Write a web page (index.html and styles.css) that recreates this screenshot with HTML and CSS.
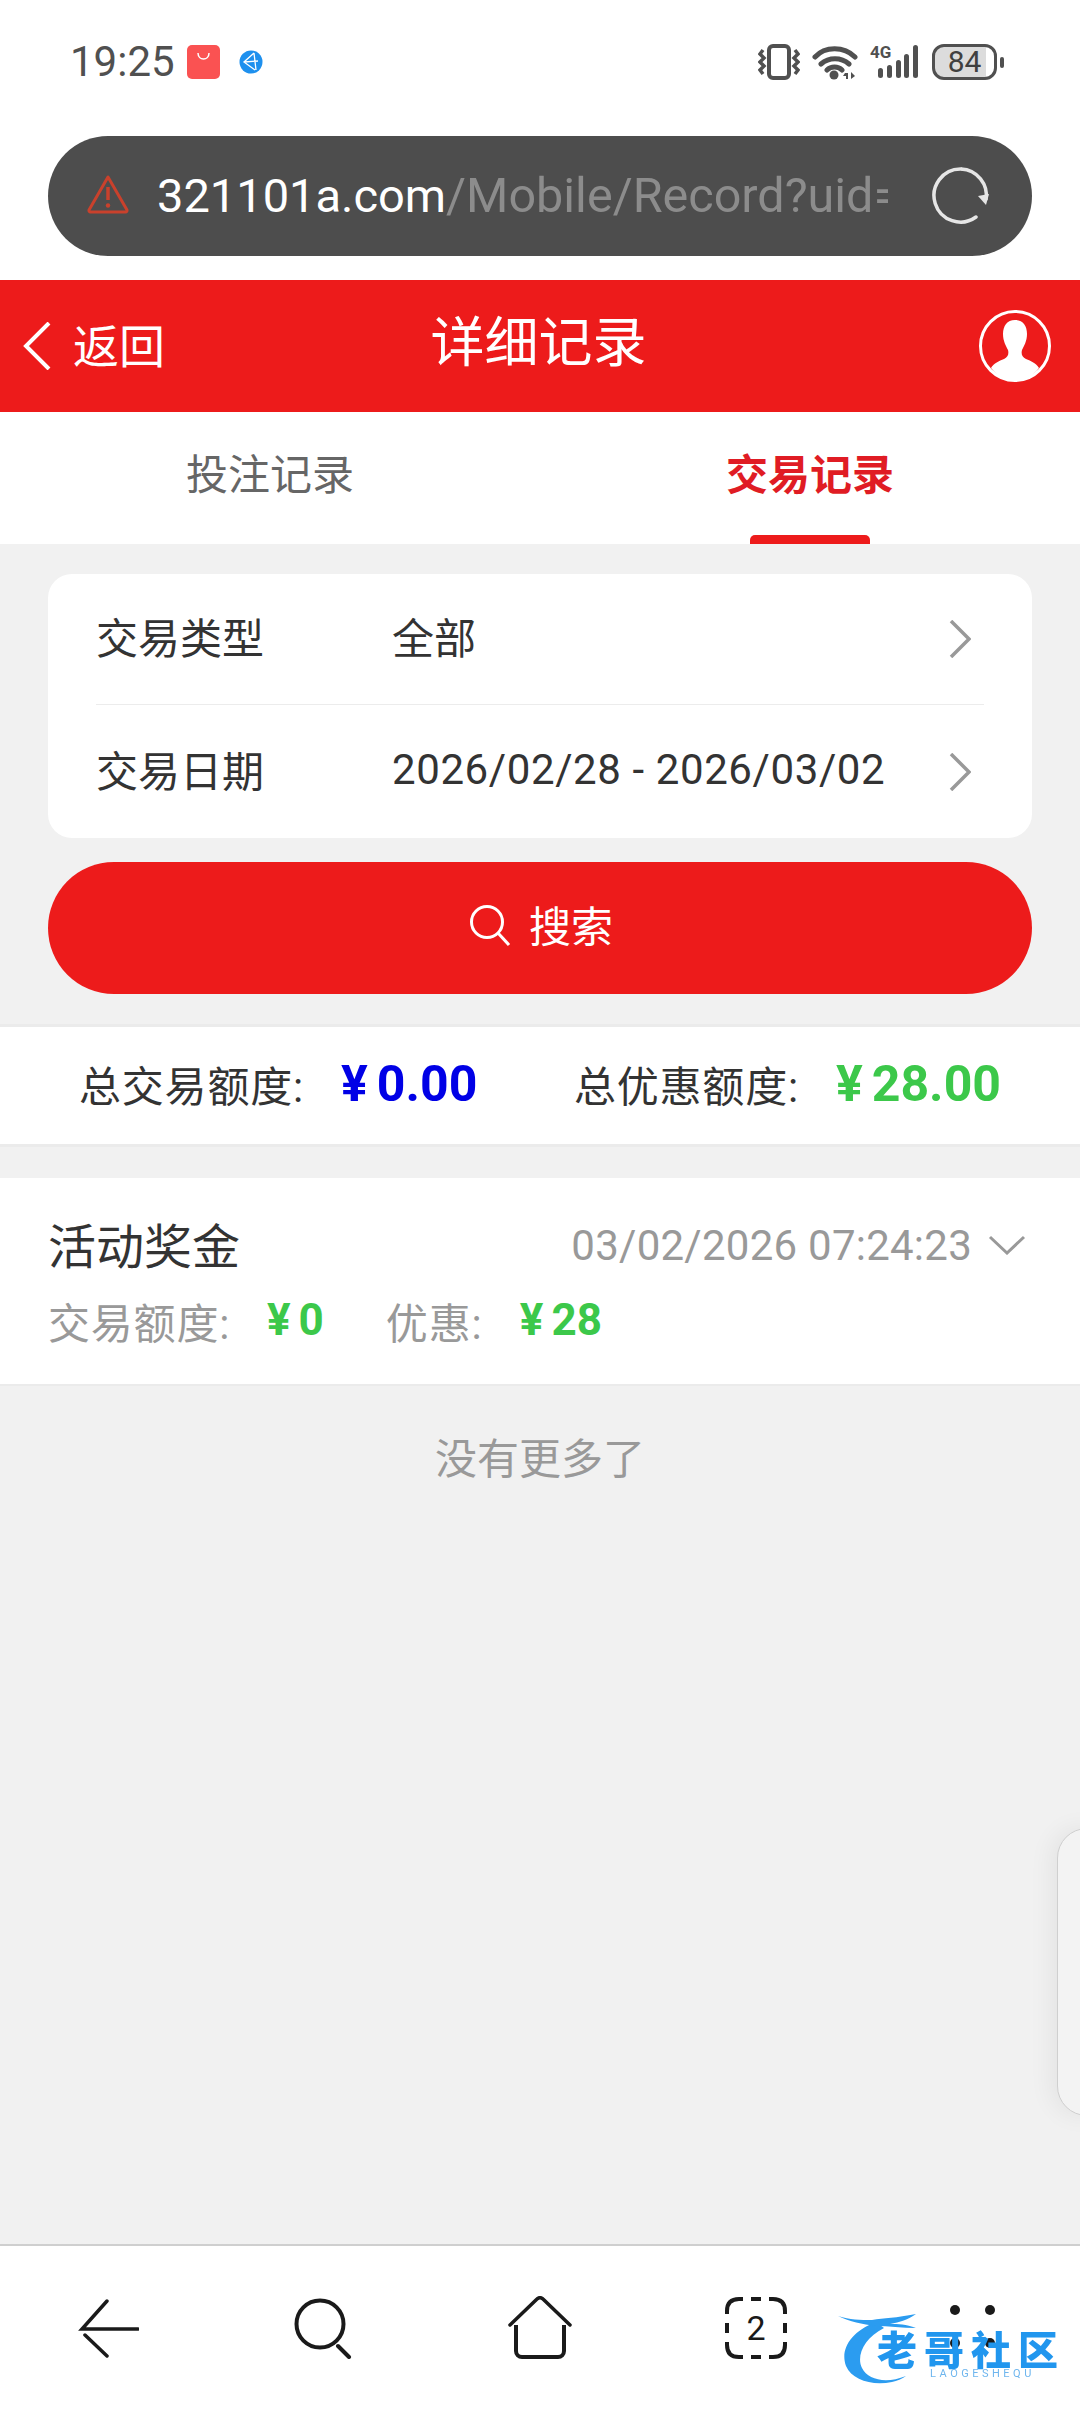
FILE: index.html
```html
<!DOCTYPE html>
<html lang="zh-CN">
<head>
    <meta charset="UTF-8">
    <meta name="viewport" content="width=device-width, initial-scale=1.0">
    <title>详细记录</title>
    <link rel="stylesheet" href="styles.css">
</head>
<body>
<div class="phone">
    <!-- Android status bar -->
    <div class="status-bar">
        <div class="status-left">
            <span class="time">19:25</span>
            <svg class="app-bag" width="33" height="34" viewBox="0 0 33 34">
                <rect width="33" height="34" rx="5" fill="#fa5252"/>
                <path d="M11 8c0 8 11 8 11 0" fill="none" stroke="#fff" stroke-width="1.5"/>
            </svg>
            <svg class="app-globe" width="24" height="24" viewBox="0 0 24 24">
                <circle cx="12" cy="12" r="11.5" fill="#1e90ee"/>
                <path d="M15 3L5 12l11 8M15 3l2 17M5 12l14-1" fill="none" stroke="#fff" stroke-width="1.3"/>
            </svg>
        </div>
        <div class="status-right">
            <svg width="42" height="36" viewBox="0 0 42 36">
                <rect x="11" y="2" width="20" height="32" rx="4" fill="none" stroke="#505050" stroke-width="4"/>
                <path d="M5 6L2 10l4 4-4 4 4 4-4 4 3 4M37 6l3 4-4 4 4 4-4 4 4 4-3 4" fill="none" stroke="#505050" stroke-width="3.5"/>
            </svg>
            <svg width="46" height="36" viewBox="0 0 46 36">
                <path d="M3 13C13 2 32 2 43 13M9 20c8-7 20-7 28 0M15 26c4-4 11-4 15 0" fill="none" stroke="#505050" stroke-width="5" stroke-linecap="round"/>
                <circle cx="22" cy="31" r="4.5" fill="#505050"/>
                <path d="M33 29h3v6h-2v-3h-3zM39 28l4 4-4 3z" fill="#505050"/>
            </svg>
            <div class="signal">
                <span class="signal-4g">4G</span>
                <svg width="44" height="36" viewBox="0 0 44 36">
                    <g fill="#505050">
                        <rect x="2" y="24" width="5" height="10" rx="2.5"/>
                        <rect x="11" y="21" width="5" height="13" rx="2.5"/>
                        <rect x="20" y="16" width="5" height="18" rx="2.5"/>
                        <rect x="28" y="10" width="5" height="24" rx="2.5"/>
                        <rect x="37" y="1" width="5" height="33" rx="2.5"/>
                    </g>
                </svg>
            </div>
            <div class="battery">
                <div class="battery-body">84</div>
                <div class="battery-nub"></div>
            </div>
        </div>
    </div>

    <!-- Browser address bar -->
    <div class="url-wrap">
        <div class="url-bar">
            <svg class="url-warn" width="44" height="40" viewBox="0 0 44 40">
                <path d="M22 3L3 36a1.500 1.500 0 0 0 1.500 2h35a1.500 1.500 0 0 0 1.500-2z" fill="none" stroke="#c9412c" stroke-width="3" stroke-linejoin="round"/>
                <path d="M22 13v13" stroke="#c9412c" stroke-width="3.500"/>
                <circle cx="22" cy="31.500" r="2.200" fill="#c9412c"/>
            </svg>
            <div class="url-text"><span class="url-host">321101a.com</span>/Mobile/Record?uid=</div>
            <svg class="url-reload" width="62" height="60" viewBox="0 0 62 60">
                <path d="M33 3A26.500 26.500 0 1 0 48 51" fill="none" stroke="#e6e6e6" stroke-width="3.500" stroke-linecap="round"/>
                <path d="M33 3a26.500 26.500 0 0 1 25 31" fill="none" stroke="#e6e6e6" stroke-width="3.500"/>
                <path d="M50 30l8 9 3-11z" fill="#e6e6e6"/>
            </svg>
        </div>
    </div>

    <!-- Page header -->
    <div class="header">
        <div class="header-back">
            <svg width="28" height="48" viewBox="0 0 28 48">
                <path d="M26 1L3 24l23 23" fill="none" stroke="#fff" stroke-width="4"/>
            </svg>
            <span>返回</span>
        </div>
        <div class="header-title">详细记录</div>
        <svg class="header-user" width="74" height="74" viewBox="0 0 74 74">
            <circle cx="37" cy="37" r="34.500" fill="#ed1b1b" stroke="#fff" stroke-width="3"/>
            <path d="M37 11c8 0 12 6 12 14 0 7-3 12-5 16-1 4 0 7 4 9 5 2 10 4 13 9-6 8-15 13-24 13s-18-5-24-13c3-5 8-7 13-9 4-2 5-5 4-9-2-4-5-9-5-16 0-8 4-14 12-14z" fill="#fff"/>
        </svg>
    </div>

    <!-- Tabs -->
    <div class="tabs">
        <div class="tab">投注记录</div>
        <div class="tab tab-active">交易记录</div>
    </div>

    <!-- Main content -->
    <div class="content">
        <div class="filter-card">
            <div class="filter-row filter-row-first">
                <span class="filter-label">交易类型</span>
                <span class="filter-value">全部</span>
                <svg width="22" height="38" viewBox="0 0 22 38"><path d="M2 1l18 18L2 37" fill="none" stroke="#999" stroke-width="3.500"/></svg>
            </div>
            <div class="filter-row">
                <span class="filter-label">交易日期</span>
                <span class="filter-value filter-date">2026/02/28 - 2026/03/02</span>
                <svg width="22" height="38" viewBox="0 0 22 38"><path d="M2 1l18 18L2 37" fill="none" stroke="#999" stroke-width="3.500"/></svg>
            </div>
        </div>

        <button class="search-button">
            <svg width="42" height="42" viewBox="0 0 42 42">
                <circle cx="18" cy="18" r="15.500" fill="none" stroke="#fff" stroke-width="3"/>
                <path d="M29 29l11 12" stroke="#fff" stroke-width="3"/>
            </svg>
            <span>搜索</span>
        </button>

        <div class="summary">
            <div class="summary-part">
                <span class="summary-label">总交易额度:</span>
                <span class="summary-num num-blue"><span class="yen">¥</span>0.00</span>
            </div>
            <div class="summary-part">
                <span class="summary-label">总优惠额度:</span>
                <span class="summary-num num-green"><span class="yen">¥</span>28.00</span>
            </div>
        </div>

        <div class="record">
            <div class="record-top">
                <span class="record-name">活动奖金</span>
                <div class="record-time">
                    <span>03/02/2026 07:24:23</span>
                    <svg width="38" height="20" viewBox="0 0 38 20"><path d="M2 2l17 16L36 2" fill="none" stroke="#999" stroke-width="3"/></svg>
                </div>
            </div>
            <div class="record-bottom">
                <span class="record-label">交易额度:</span>
                <span class="record-num"><span class="yen-small">¥</span>0</span>
                <span class="record-label record-label-gap">优惠:</span>
                <span class="record-num"><span class="yen-small">¥</span>28</span>
            </div>
        </div>

        <div class="no-more">没有更多了</div>
    </div>

    <!-- Browser bottom bar -->
    <div class="bottom-bar">
        <div class="bar-item">
            <svg width="62" height="60" viewBox="0 0 62 60">
                <path d="M30 3L5 31h56M8 37l22 21" fill="none" stroke="#1a1a1a" stroke-width="3.500" stroke-linecap="round"/>
            </svg>
        </div>
        <div class="bar-item">
            <svg width="60" height="62" viewBox="0 0 60 62">
                <circle cx="26" cy="27" r="23.500" fill="none" stroke="#1a1a1a" stroke-width="4"/>
                <path d="M44 49l11 11" stroke="#1a1a1a" stroke-width="4" stroke-linecap="round"/>
            </svg>
        </div>
        <div class="bar-item">
            <svg width="66" height="64" viewBox="0 0 66 64">
                <path d="M3 29L30 3a4 4 0 0 1 6 0l27 26" fill="none" stroke="#1a1a1a" stroke-width="3.500" stroke-linecap="round"/>
                <path d="M9 29v26a6 6 0 0 0 6 6h36a6 6 0 0 0 6-6V29" fill="none" stroke="#1a1a1a" stroke-width="4"/>
            </svg>
        </div>
        <div class="bar-item">
            <div class="tab-count">
                <svg width="62" height="62" viewBox="0 0 62 62">
                    <path d="M2 17V14Q2 2 14 2h4M44 2h4q12 0 12 12v3M60 45v3q0 12-12 12h-4M18 60h-4Q2 60 2 48v-3M26 2h10M26 60h10M2 26v10M60 26v10" fill="none" stroke="#1a1a1a" stroke-width="4"/>
                </svg>
                <span>2</span>
            </div>
        </div>
        <div class="bar-item">
            <div class="menu-dots"><i></i><i></i><i></i><i></i></div>
        </div>
    </div>

    <!-- Floating side panel -->
    <div class="side-panel"></div>

    <!-- Watermark over the bottom bar -->
    <div class="watermark">
        <svg class="watermark-dragon" width="110" height="80" viewBox="0 0 110 80">
            <path d="M40 12C14 22 4 40 10 56c6 14 26 20 46 16 5-1 10-3 14-6-20 8-38 4-44-8-6-12 2-30 22-40z" fill="#2b9cf0"/>
            <path d="M2 6c12 4 22 4 34 4 12-2 24-2 44-6-8 6-16 8-26 10 8 0 16 0 26 4-14 0-28-2-40-2-14-2-26-4-38-10z" fill="#2b9cf0"/>
        </svg>
        <div class="watermark-name">老哥社区</div>
        <div class="watermark-en">LAOGESHEQU</div>
    </div>
</div>
</body>
</html>
```

FILE: styles.css
```css
/* Base styles */
body {
    margin: 0;
    padding: 0;
    font-family: Roboto, "Noto Sans CJK SC", sans-serif;
    color: #333;
}

.phone {
    position: relative;
    width: 1080px;
    height: 2412px;
    display: flex;
    flex-direction: column;
    overflow: hidden;
    background-color: #f1f1f1;
}

/* Status bar */
.status-bar {
    height: 124px;
    flex-shrink: 0;
    box-sizing: border-box;
    padding: 0 76px 0 70px;
    display: flex;
    justify-content: space-between;
    align-items: center;
    background-color: #fff;
}

.status-left {
    display: flex;
    align-items: center;
}

.time {
    font-size: 42px;
    line-height: 50px;
    color: #505050;
    width: 117px;
}

.app-globe {
    margin-left: 19px;
}

.status-right {
    display: flex;
    align-items: center;
}

.signal {
    display: flex;
    align-items: flex-end;
    position: relative;
    width: 50px;
}

.signal svg {
    margin-left: 6px;
}

.signal-4g {
    position: absolute;
    left: 0;
    top: -1px;
    font-size: 17px;
    line-height: 18px;
    font-weight: 700;
    color: #505050;
}

.status-right > svg {
    margin-right: 12px;
}

.battery {
    display: flex;
    align-items: center;
    margin-left: 12px;
}

.battery-body {
    width: 65px;
    height: 36px;
    box-sizing: border-box;
    border: 3px solid #505050;
    border-radius: 12px;
    background: linear-gradient(to right, #dcdcdc 86%, #fff 86%);
    color: #404040;
    font-size: 30px;
    line-height: 30px;
    text-align: center;
}

.battery-nub {
    width: 4px;
    height: 11px;
    margin-left: 3px;
    border-radius: 2px;
    background-color: #505050;
}

/* Address bar */
.url-wrap {
    height: 156px;
    flex-shrink: 0;
    box-sizing: border-box;
    padding: 12px 48px 24px;
    background-color: #fff;
}

.url-bar {
    height: 120px;
    box-sizing: border-box;
    border-radius: 60px;
    padding: 0 38px;
    display: flex;
    align-items: center;
    background-color: #4d4d4d;
}

.url-warn {
    margin-top: -4px;
}

.url-text {
    width: 731px;
    margin-left: 27px;
    overflow: hidden;
    white-space: nowrap;
    font-size: 48.500px;
    line-height: 60px;
    color: #8c8c8c;
}

.url-host {
    font-size: 47px;
    color: #fff;
}

.url-reload {
    margin-left: 40px;
}

/* Header */
.header {
    height: 132px;
    flex-shrink: 0;
    box-sizing: border-box;
    padding: 0 28px 0 23px;
    display: flex;
    align-items: center;
    justify-content: space-between;
    background-color: #ed1b1b;
    color: #fff;
}

.header-back {
    width: 280px;
    display: flex;
    align-items: center;
    font-size: 46px;
}

.header-back span {
    margin: -6px 0 0 22px;
}

.header-title {
    font-size: 54px;
    line-height: 60px;
    margin-top: -4px;
}

.header-user {
    margin-left: 204px;
}

/* Tabs */
.tabs {
    height: 132px;
    flex-shrink: 0;
    display: flex;
    background-color: #fff;
}

.tab {
    flex: 1;
    position: relative;
    text-align: center;
    font-size: 42px;
    line-height: 128px;
    color: #666;
}

.tab-active {
    color: #e01c24;
    font-weight: 700;
}

.tab-active::after {
    content: "";
    position: absolute;
    left: 210px;
    bottom: 0;
    width: 120px;
    height: 9px;
    border-radius: 5px 5px 0 0;
    background-color: #ed1b1b;
}

/* Content */
.content {
    flex: 1;
    padding-top: 30px;
}

.filter-card {
    margin: 0 48px;
    padding: 0 48px;
    border-radius: 24px;
    background-color: #fff;
}

.filter-row {
    height: 133px;
    display: flex;
    align-items: center;
}

.filter-row-first {
    height: 130px;
    border-bottom: 1px solid #ececec;
}

.filter-label {
    width: 296px;
    font-size: 42px;
    margin-top: -7px;
}

.filter-value {
    flex: 1;
    font-size: 42px;
    margin-top: -7px;
}

.filter-date {
    letter-spacing: 0.6px;
    margin-top: -5px;
}

.filter-row svg {
    margin-right: 13px;
}

.search-button {
    display: flex;
    width: 984px;
    height: 132px;
    margin: 24px 48px 0;
    padding: 0 0 6px;
    border: none;
    border-radius: 66px;
    align-items: center;
    justify-content: center;
    font-family: inherit;
    font-size: 42px;
    color: #fff;
    background-color: #ed1b1b;
}

.search-button svg {
    margin-left: 2px;
}

.search-button span {
    margin: -4px 0 0 18px;
}

.summary {
    height: 123px;
    margin-top: 30px;
    box-sizing: border-box;
    border-top: 3px solid #ebebeb;
    border-bottom: 3px solid #ebebeb;
    padding: 0 79px 4px 79px;
    display: flex;
    justify-content: space-between;
    align-items: center;
    background-color: #fff;
}

.summary-part {
    display: flex;
    align-items: center;
}

.summary-label {
    font-size: 42px;
    letter-spacing: 0.8px;
    width: 262px;
}

.summary-num {
    font-size: 50px;
    font-weight: 700;
}

.yen {
    margin-right: 9px;
}

.yen-small {
    margin-right: 8px;
}

.num-blue {
    color: #0000e6;
}

.num-green {
    color: #3cc84a;
}

.record {
    height: 208px;
    margin-top: 31px;
    box-sizing: border-box;
    border-bottom: 2px solid #ebebeb;
    padding: 32px 54px 0 48px;
    background-color: #fff;
}

.record-top {
    display: flex;
    justify-content: space-between;
    align-items: center;
    height: 70px;
}

.record-name {
    font-size: 48px;
    margin-top: -5px;
    color: #333;
}

.record-time {
    display: flex;
    align-items: center;
    font-size: 42px;
    letter-spacing: 0.25px;
    color: #999;
}

.record-time svg {
    margin-left: 16px;
}

.record-bottom {
    margin-top: 10px;
    height: 60px;
    display: flex;
    align-items: center;
}

.record-label {
    font-size: 42px;
    letter-spacing: 0.8px;
    color: #999;
    width: 219px;
}

.record-label-gap {
    width: 134px;
    margin-left: 62px;
}

.record-num {
    font-size: 44px;
    font-weight: 700;
    color: #3cc84a;
}

.no-more {
    height: 146px;
    line-height: 148px;
    text-align: center;
    font-size: 42px;
    color: #999;
}

/* Bottom bar */
.bottom-bar {
    height: 168px;
    flex-shrink: 0;
    box-sizing: border-box;
    border-top: 2px solid #cfcfcf;
    padding-bottom: 2px;
    display: grid;
    grid-template-columns: repeat(5, 1fr);
    align-items: center;
    background-color: #fff;
}

.bar-item {
    display: flex;
    justify-content: center;
    align-items: center;
}

.tab-count {
    display: grid;
    place-items: center;
    width: 62px;
    height: 62px;
    font-size: 34px;
    color: #1a1a1a;
}

.tab-count svg,
.tab-count span {
    grid-area: 1 / 1;
}

.menu-dots {
    display: grid;
    grid-template-columns: 10px 10px;
    column-gap: 25px;
    row-gap: 23px;
    margin-top: -3px;
}

.menu-dots i {
    width: 10px;
    height: 10px;
    border-radius: 50%;
    background-color: #1a1a1a;
}

/* Floating panel on the right edge */
.side-panel {
    position: absolute;
    left: 1057px;
    top: 1828px;
    width: 60px;
    height: 288px;
    box-sizing: border-box;
    border: 1px solid #cfcfcf;
    border-radius: 34px;
    background-color: #f3f3f3;
    box-shadow: -6px 0 24px rgba(0, 0, 0, 0.06);
}

/* Watermark */
.watermark {
    position: absolute;
    left: 836px;
    top: 2308px;
    width: 230px;
    height: 80px;
    filter: blur(0.6px);
}

.watermark-dragon {
    position: absolute;
    left: 0;
    top: 2px;
}

.watermark-name {
    position: absolute;
    left: 41px;
    top: 21px;
    font-size: 40px;
    line-height: 46px;
    font-weight: 900;
    letter-spacing: 7px;
    color: #2196ee;
    white-space: nowrap;
}

.watermark-en {
    position: absolute;
    left: 94px;
    top: 60px;
    font-size: 11px;
    line-height: 12px;
    letter-spacing: 3.500px;
    color: #6fb6ee;
    white-space: nowrap;
}
```
